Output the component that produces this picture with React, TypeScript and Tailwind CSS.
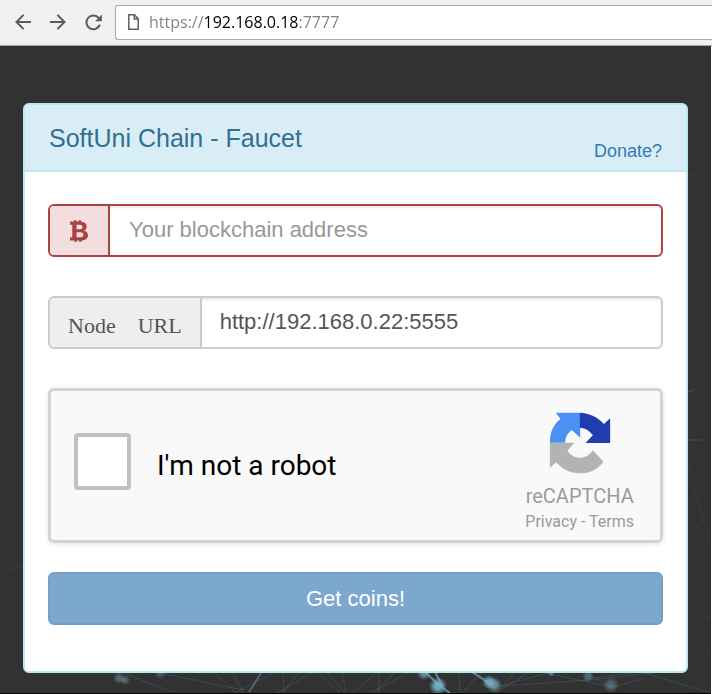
import type { ReactNode } from "react";

function NavButton({ label, children }: { label: string; children: ReactNode }) {
  return (
    <button type="button" aria-label={label} className="flex h-5 w-4 shrink-0 items-center justify-center text-[#5a5a5a]">
      {children}
    </button>
  );
}

function BrowserBar() {
  return (
    <header className="relative flex h-[46px] items-center border-b border-[#a5a5a5] bg-[#f1f1f1] pb-px pl-[15px]">
      <nav aria-label="Browser" className="flex gap-[19px]">
        <NavButton label="Back">
          <svg width="16" height="16" viewBox="0 0 16 16" fill="none" stroke="currentColor" strokeWidth="2">
            <path d="M16 8H1.6M8.6.9 1.5 8l7.1 7.1" />
          </svg>
        </NavButton>
        <NavButton label="Forward">
          <svg width="16" height="16" viewBox="0 0 16 16" fill="none" stroke="currentColor" strokeWidth="2">
            <path d="M0 8h14.4M7.4.9 14.5 8l-7.1 7.1" />
          </svg>
        </NavButton>
        <NavButton label="Reload">
          <svg className="shrink-0" width="17" height="17" viewBox="0 0 17 17" fill="none" stroke="currentColor" strokeWidth="2">
            <path d="M13.8 4.1A6.9 6.9 0 1 0 14.9 10.7" />
            <path d="M16.9.5v6.7h-6.7z" fill="currentColor" stroke="none" />
          </svg>
        </NavButton>
      </nav>
      <div className="ml-[14px] flex h-[35px] min-w-0 flex-1 items-center gap-[10px] rounded-l-[3px] border border-r-0 border-[#a9a9a9] bg-white pl-3">
        <svg className="shrink-0" width="11" height="16" viewBox="0 0 11 16" fill="none" stroke="#5f5f5f" strokeWidth="1.5">
          <path d="M.8.8h5.7l3.7 3.9v10.5H.8zM6.3.8v4.1h3.9" />
        </svg>
        <input
          aria-label="Address"
          defaultValue="https://192.168.0.18:7777"
          className="h-full min-w-0 flex-1 bg-[linear-gradient(90deg,#808080_55px,#000_55px,#000_150px,#808080_150px)] bg-clip-text font-['Open_Sans','Noto_Sans',sans-serif] text-[16px] text-transparent outline-none"
        />
      </div>
    </header>
  );
}

// Faint web of glowing nodes behind the card, visible around its edges.
function NetworkBackdrop() {
  return (
    <svg
      aria-hidden="true"
      className="absolute inset-0 h-full w-full"
      viewBox="0 0 711 647"
      preserveAspectRatio="xMidYMax slice"
      fill="none"
      stroke="#6ea3b8"
    >
      <defs>
        <radialGradient id="glow">
          <stop offset="0.35" stopColor="#78b4cc" />
          <stop offset="1" stopColor="#78b4cc" stopOpacity="0" />
        </radialGradient>
      </defs>
      <g strokeOpacity=".2">
        <path d="M115 624 170 645M155 626l88 18M214 626l22 21M232 626l12 21M262 626l-13 21M275 626l-40 21M283 626l1 21M300 626l-18 21M313 626l-36 21M318 626l22 21M327 626l18 21M342 626l4 21M378 626l-26 21M379 626v21M395 626l-20 21M410 626l-40 21M459 626l1 21M482 626l-20 21M515 626l-18 21M530 626l-35 21M472 626l28 14 52-14M500 640l90-6 70-8M550 628l62 13M588 629l24 12 30-8M641 626l70 21M585 633l70-9" />
      </g>
      <path d="m261 627-12 19" strokeWidth="2" strokeOpacity=".4" />
      <path d="m425 626 15 14 10 7M435 626l8 15M472 626l20 13" stroke="#8ec8df" strokeWidth="2" strokeOpacity=".55" />
      <g stroke="none" fill="url(#glow)">
        <circle cx="119" cy="632" r="6" fillOpacity=".4" />
        <circle cx="125" cy="634" r="5" fillOpacity=".4" />
        <circle cx="160" cy="627" r="6" fillOpacity=".3" />
        <circle cx="424" cy="627" r="7" fillOpacity=".7" />
        <circle cx="438" cy="640" r="9" fillOpacity=".9" />
        <circle cx="489" cy="636" r="7" fillOpacity=".8" />
        <circle cx="494" cy="639" r="8" fillOpacity=".7" />
        <circle cx="551" cy="627" r="4" fillOpacity=".5" />
        <circle cx="588" cy="630" r="6" fillOpacity=".4" />
        <circle cx="611" cy="639" r="8" fillOpacity=".4" />
      </g>
      <path d="m688 118 9-7M688 130l23-6M688 346l7-3M688 394h14M688 420l20 70M688 470l22 26M0 383l23-15M0 527l23-7M690 574l21-4M690 620l21-18" strokeOpacity=".09" />
      <path d="m688 346 7-3M688 394h14" strokeOpacity=".25" />
    </svg>
  );
}

function BitcoinIcon() {
  return (
    <svg width="18" height="22" viewBox="210 387 55 66" fill="#a94442" fillRule="evenodd" role="img" aria-label="Bitcoin">
      <path d="M210 391h12v-4h8v4h6v-4h8v5c12 1 17 7 17 15 0 6-3 10-8 12 8 2 12 7 12 14 0 9-7 15-19 16v4h-8v-4h-7v4h-8v-4h-13v-10h7v-38h-7zM230 401v14h10c6 0 8-3 8-7s-3-7-8-7zM230 424v15h12c6 0 9-3 9-8 0-4-3-7-9-7z" />
    </svg>
  );
}

function RecaptchaLogo() {
  return (
    <svg width="62" height="62" viewBox="147 111 185 186" role="img" aria-label="reCAPTCHA logo">
      <path fill="#4a90f5" d="M240 113h-73l14 19c-21 16-32 40-32 71h46c0-15 7-29 20-38l25 23z" />
      <path fill="#1f3db0" d="M239 113c29 1 54 13 72 34l19-17v74h-74l22-23c-10-14-22-22-39-23z" />
      <path fill="#b3b3b3" d="M149 203h73l-20 24c8 13 22 21 38 21s29-8 38-22l32 34c-17 23-42 35-70 35-29 0-53-11-72-33l-19 17z" />
    </svg>
  );
}

export default function App() {
  return (
    <div className="flex min-h-screen flex-col bg-white font-['Liberation_Sans',Arial,sans-serif]">
      <BrowserBar />
      <main className="relative mr-px flex-1 border-b border-black bg-[#323232] px-[23px] pb-5 pt-[57px]">
        <NetworkBackdrop />
        <section className="relative rounded-md border-2 border-[#bce8f1] bg-white">
          <div className="flex h-[67px] items-center justify-between rounded-t border-b-2 border-[#bce8f1] bg-[#d9edf7] px-6">
            <h1 className="text-[25px] leading-7 text-[#31708f]">SoftUni Chain - Faucet</h1>
            <a href="#donate" className="mt-[26px] text-[18px] leading-6 text-[#337ab7]">
              Donate?
            </a>
          </div>
          <form className="px-[23px] pb-[46px] pt-8" onSubmit={(e) => e.preventDefault()}>
            <div className="flex h-[53px] overflow-hidden rounded-md border-2 border-[#a94442]">
              <label htmlFor="address" className="flex w-[60px] shrink-0 items-center justify-center border-r-2 border-[#a94442] bg-[#f2dede]">
                <BitcoinIcon />
              </label>
              <input
                id="address"
                placeholder="Your blockchain address"
                className="min-w-0 flex-1 px-[19px] pb-0.5 text-[22px] text-[#555] shadow-[inset_0_2px_2px_rgba(0,0,0,0.075)] outline-none placeholder:text-[#999]"
              />
            </div>

            <div className="mt-[39px] flex h-[53px] overflow-hidden rounded-md border-2 border-[#ccc]">
              <label
                htmlFor="node"
                className="flex shrink-0 items-center gap-[22px] border-r-2 border-[#ccc] bg-[#eee] px-[18px] pt-1.5 font-['Liberation_Serif','Times_New_Roman',serif] text-[22px] leading-6 text-[#555]"
              >
                <span>Node</span>
                <span>URL</span>
              </label>
              <input
                id="node"
                defaultValue="http://192.168.0.22:5555"
                className="min-w-0 flex-1 px-[18px] pb-0.5 text-[22px] text-[#555] shadow-[inset_0_2px_2px_rgba(0,0,0,0.075)] outline-none"
              />
            </div>

            <div className="mt-[39px] flex h-[155px] items-center justify-between rounded-md border-[3px] border-[#d3d3d3] bg-[#f9f9f9] pl-[23px] pr-[26px] font-[Roboto,sans-serif] shadow-[0_1px_4px_1px_rgba(0,0,0,0.08)]">
              <div className="flex items-center gap-[26px]">
                <input id="robot" type="checkbox" className="mb-2 size-[57px] appearance-none rounded border-4 border-[#c1c1c1] bg-white" />
                <label htmlFor="robot" className="text-[28px] leading-8 text-black">
                  I'm not a robot
                </label>
              </div>
              <div className="flex flex-col items-center pt-[14px] text-[#9b9b9b]">
                <RecaptchaLogo />
                <span className="mt-2 text-[20px] leading-7">reCAPTCHA</span>
                <span className="text-[16px] leading-6">
                  <a href="#privacy">Privacy</a> - <a href="#terms">Terms</a>
                </span>
              </div>
            </div>

            <button type="submit" className="mt-[29px] h-[53px] w-full rounded-md border-2 border-[#779fc5] bg-[#7ca8d0] text-[22px] text-white">
              Get coins!
            </button>
          </form>
        </section>
      </main>
    </div>
  );
}
